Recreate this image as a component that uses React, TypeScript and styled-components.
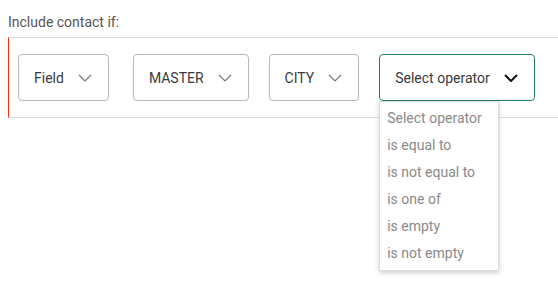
import React from 'react';
import styled, { createGlobalStyle } from 'styled-components';

const GlobalStyle = createGlobalStyle`
  body {
    margin: 8px 0 0 8px;
    min-height: 284px;
    font-family: Roboto, "Liberation Sans", sans-serif;
    background: #fff;
  }
`;

const Label = styled.div`
  padding-top: 4px;
  margin-bottom: 5px;
  font-size: 14px;
  line-height: 20px;
  color: #555;
`;

const RulePanel = styled.div`
  display: flex;
  align-items: center;
  padding: 16px 0 16px 9px;
  border-top: 1px solid #ddd;
  border-bottom: 1px solid #ddd;
  border-left: 1px solid #e8321e;
`;

const SelectWrap = styled.div<{ $gap: number }>`
  position: relative;
  margin-right: ${p => p.$gap}px;
`;

const SelectBox = styled.div<{ $active?: boolean }>`
  display: inline-flex;
  align-items: center;
  gap: 14px;
  height: 47px;
  box-sizing: border-box;
  padding: 0 16px 0 15px;
  border: 1px solid ${p => (p.$active ? '#2b7d6d' : '#b4b9bf')};
  border-radius: 4px;
  font-size: 14px;
  color: #3a3a3a;
  background: #fff;
`;

const Menu = styled.ul`
  position: absolute;
  top: 100%;
  left: 0;
  z-index: 2;
  width: 120px;
  box-sizing: border-box;
  margin: 0;
  padding: 3px 0;
  list-style: none;
  background: #fff;
  border: 1px solid #ddd;
  box-shadow: 0 2px 5px rgba(0, 0, 0, 0.2);
`;

const MenuItem = styled.li`
  height: 27px;
  line-height: 27px;
  padding-left: 7px;
  font-size: 14px;
  color: #8a8a8a;
  white-space: nowrap;
`;

const Chevron = ({ dark }: { dark?: boolean }) => (
  <svg width="14" height="8" viewBox="0 0 14 8">
    <polyline
      points="1,1 7,7 13,1"
      fill="none"
      stroke={dark ? '#111' : '#777'}
      strokeWidth={dark ? 2 : 1.2}
    />
  </svg>
);

const operators = [
  'Select operator',
  'is equal to',
  'is not equal to',
  'is one of',
  'is empty',
  'is not empty',
];

export default function App() {
  return (
    <>
      <GlobalStyle />
      <Label>Include contact if:</Label>
      <RulePanel>
        <SelectWrap $gap={24}>
          <SelectBox>
            Field <Chevron />
          </SelectBox>
        </SelectWrap>
        <SelectWrap $gap={20}>
          <SelectBox>
            MASTER <Chevron />
          </SelectBox>
        </SelectWrap>
        <SelectWrap $gap={20}>
          <SelectBox>
            CITY <Chevron />
          </SelectBox>
        </SelectWrap>
        <SelectWrap $gap={0}>
          <SelectBox $active>
            Select operator <Chevron dark />
          </SelectBox>
          <Menu>
            {operators.map(op => (
              <MenuItem key={op}>{op}</MenuItem>
            ))}
          </Menu>
        </SelectWrap>
      </RulePanel>
    </>
  );
}
